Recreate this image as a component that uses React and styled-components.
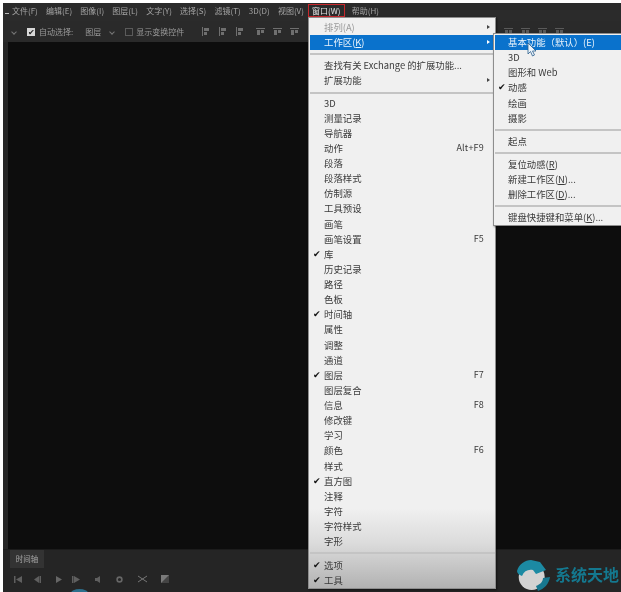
import styled, { createGlobalStyle } from "styled-components";

const Global = createGlobalStyle`
  html, body { margin: 0; padding: 0; background: #fff; overflow: hidden; }
  body { font-family: "Noto Sans CJK SC", "Liberation Sans", sans-serif; }
`;

const Shell = styled.div`
  position: relative;
  width: 621px;
  height: 592px;
  overflow: hidden;
  padding: 3px 0 0 3px;
  box-sizing: border-box;
  display: flex;
  flex-direction: column;
  background: #fff;
  filter: blur(0.5px);
`;

const MenuBar = styled.div`
  height: 18px;
  box-sizing: border-box;
  padding: 0 0 4px 9px;
  flex: none;
  display: flex;
  align-items: center;
  gap: 8.2px;
  background: #2b2b2b;
  color: #a3a3a3;
  font-size: 8px;
`;

const AppMark = styled.span`
  position: absolute;
  left: 5px;
  top: 13px;
  width: 4px;
  height: 1px;
  background: #bbb;
`;

const MenuTitle = styled.span`
  white-space: nowrap;
  ${(p) => p.$active && `
    color: #e4e4e4;
    line-height: 11px;
    padding: 0 3px;
    margin: 0 0 0 -3px;
    outline: 1.5px solid #c8282c;
  `}
`;

const OptionBar = styled.div`
  height: 21px;
  flex: none;
  display: flex;
  align-items: center;
  padding-left: 3px;
  background: #2a2a2a;
  color: #9a9a9a;
  font-size: 8px;
  white-space: nowrap;
`;

const Chevron = styled.span`
  width: 3px;
  height: 3px;
  border-right: 1px solid #777;
  border-bottom: 1px solid #777;
  transform: rotate(45deg);
  margin-left: ${(p) => p.$left}px;
`;

const Check = styled.span`
  width: 8px;
  height: 8px;
  margin-left: 11px;
  background: #d8d8d8;
  color: #222;
  font-size: 8px;
  line-height: 8px;
  text-align: center;
`;

const Box = styled.span`
  width: 6px;
  height: 6px;
  margin-left: 11px;
  border: 1px solid #5b5b5b;
`;

const OptionLabel = styled.span`
  margin-left: ${(p) => p.$left}px;
`;

const AlignGroup = styled.div`
  display: flex;
  gap: 8px;
  margin-left: ${(p) => p.$left}px;
  opacity: ${(p) => (p.$dim ? 0.7 : 1)};
`;

const Workspace = styled.div`
  flex: 1;
  background: #262626;
  padding-left: 5px;
  display: flex;
`;

const Canvas = styled.div`
  flex: 1;
  background: #0d0d0d;
`;

const TimelinePanel = styled.div`
  height: 42px;
  flex: none;
  background: #252525;
  padding-left: 7px;
  display: flex;
  flex-direction: column;
  border-top: 1px solid #1c1c1c;
`;

const TimelineTab = styled.div`
  width: 34px;
  height: 18px;
  background: #333;
  color: #a8a8a8;
  font-size: 7.5px;
  line-height: 18px;
  text-align: center;
`;

const Controls = styled.div`
  display: flex;
  align-items: center;
  gap: 10px;
  height: 22px;
  padding-left: 4px;
`;

const PlayheadArc = styled.div`
  position: absolute;
  left: 71px;
  top: 589px;
  width: 17px;
  height: 8px;
  border-radius: 50%;
  background: #2d6f8c;
`;

const Menu = styled.div`
  position: absolute;
  box-sizing: border-box;
  left: ${(p) => p.$left}px;
  top: ${(p) => p.$top}px;
  width: ${(p) => p.$width}px;
  padding: ${(p) => p.$pad}px 0 0 1px;
  height: ${(p) => p.$height}px;
  background: ${(p) =>
    p.$fade
      ? "linear-gradient(#f0f0f0 0, #f0f0f0 86%, #dcdcdc 92%, #b2b2b2 100%)"
      : "#f0f0f0"};
  border: 1px solid #8d8d8d;
  box-shadow: 1px 1px 2px rgba(0, 0, 0, 0.5);
  color: #3a3a3a;
  font-size: 9.4px;
`;

const Row = styled.div`
  position: relative;
  height: 15.13px;
  line-height: 14px;
  padding-left: ${(p) => p.$indent}px;
  white-space: nowrap;
  ${(p) => p.$disabled && "color: #9b9b9b;"}
  ${(p) => p.$active && "background: #0a72cc; color: #e9f3fb;"}
`;

const Tick = styled.span`
  position: absolute;
  left: 3px;
  top: 0;
  font-size: 9px;
  color: #111;
`;

const Shortcut = styled.span`
  position: absolute;
  right: 11px;
  top: 0;
  font-size: 9px;
  letter-spacing: 0.2px;
`;

const Caret = styled.span`
  position: absolute;
  right: 5px;
  top: 5px;
  border-left: 3px solid ${(p) => (p.$light ? "#fff" : "#444")};
  border-top: 2.5px solid transparent;
  border-bottom: 2.5px solid transparent;
`;

const Divider = styled.div`
  height: 2px;
  margin: ${(p) => p.$top}px 0 ${(p) => p.$bottom}px;
  background: #c4c4c4;
`;

const Cursor = styled.svg`
  position: absolute;
  left: 527px;
  top: 42px;
`;

const Watermark = styled.div`
  position: absolute;
  left: 516px;
  top: 560px;
  display: flex;
  align-items: center;
  gap: 3px;
`;

const WatermarkText = styled.span`
  color: #14788f;
  font-size: 16px;
  font-weight: 700;
  line-height: 30px;
  margin-top: -4px;
  white-space: nowrap;
`;

const titles = ["文件(F)", "编辑(E)", "图像(I)", "图层(L)", "文字(Y)", "选择(S)", "滤镜(T)", "3D(D)", "视图(V)"];

const panelItems = [
  ["3D"], ["测量记录"], ["导航器"], ["动作", "Alt+F9"], ["段落"], ["段落样式"], ["仿制源"], ["工具预设"],
  ["画笔"], ["画笔设置", "F5"], ["库", null, true], ["历史记录"], ["路径"], ["色板"], ["时间轴", null, true],
  ["属性"], ["调整"], ["通道"], ["图层", "F7", true], ["图层复合"], ["信息", "F8"], ["修改键"], ["学习"],
  ["颜色", "F6"], ["样式"], ["直方图", null, true], ["注释"], ["字符"], ["字符样式"], ["字形"],
];

function AlignIcon({ flip }) {
  return (
    <svg width="9" height="9" viewBox="0 0 9 9" fill="#6f6f6f">
      {flip ? (
        <>
          <rect x="0" y="1" width="9" height="1" />
          <rect x="1" y="3" width="3" height="5" />
          <rect x="5" y="3" width="3" height="3" />
        </>
      ) : (
        <>
          <rect x="1" y="0" width="1" height="9" />
          <rect x="3" y="1" width="5" height="3" />
          <rect x="3" y="5" width="3" height="3" />
        </>
      )}
    </svg>
  );
}

function TimelineIcons() {
  return (
    <Controls>
      <svg width="8" height="7" viewBox="0 0 8 7" fill="#5f5f5f"><rect width="1.5" height="7" /><path d="M8 0v7L2 3.5z" /></svg>
      <svg width="9" height="7" viewBox="0 0 9 7" fill="#5f5f5f"><rect width="1.5" height="7" x="7.5" /><path d="M7 0v7L2 3.5z" /></svg>
      <svg width="6" height="7" viewBox="0 0 6 7" fill="#666" style={{ marginLeft: 5 }}><path d="M0 0v7l6-3.5z" /></svg>
      <svg width="9" height="7" viewBox="0 0 9 7" fill="#5f5f5f"><rect width="1.5" height="7" /><path d="M2 0v7l6-3.5z" /></svg>
      <svg width="6" height="7" viewBox="0 0 6 7" fill="#5f5f5f" style={{ marginLeft: 4 }}><path d="M0 2h2l3-2v7L2 5H0z" /></svg>
      <svg width="7" height="7" viewBox="0 0 7 7" fill="none" stroke="#666" strokeWidth="1.6" style={{ marginLeft: 5 }}><circle cx="3.5" cy="3.5" r="2.4" /></svg>
      <svg width="11" height="8" viewBox="0 0 11 8" stroke="#777" fill="none" style={{ marginLeft: 4 }}><path d="M1 1l9 6M1 7l9-6" /></svg>
      <svg width="8" height="8" viewBox="0 0 8 8" style={{ marginLeft: 3 }}><rect width="8" height="8" fill="#7a7a7a" /><path d="M0 8l8-8v8z" fill="#444" /></svg>
    </Controls>
  );
}

function WorkspaceMenu() {
  return (
    <Menu $left={493} $top={33} $width={140} $height={193} $pad={1}>
      <Row $indent={13} $active>基本功能（默认）(E)</Row>
      <Row $indent={13}>3D</Row>
      <Row $indent={13}>图形和 Web</Row>
      <Row $indent={13}><Tick>✔</Tick>动感</Row>
      <Row $indent={13}>绘画</Row>
      <Row $indent={13}>摄影</Row>
      <Divider $top={3} $bottom={3} />
      <Row $indent={13}>起点</Row>
      <Divider $top={3} $bottom={3} />
      <Row $indent={13}>复位动感(<u>R</u>)</Row>
      <Row $indent={13}>新建工作区(<u>N</u>)...</Row>
      <Row $indent={13}>删除工作区(<u>D</u>)...</Row>
      <Divider $top={3} $bottom={3} />
      <Row $indent={13}>键盘快捷键和菜单(<u>K</u>)...</Row>
    </Menu>
  );
}

function WindowMenu() {
  return (
    <Menu $left={308} $top={17} $width={188} $height={572} $pad={2} $fade>
      <Row $indent={14} $disabled>排列(A)<Caret /></Row>
      <Row $indent={14} $active>工作区(<u>K</u>)<Caret $light /></Row>
      <Divider $top={3} $bottom={3} />
      <Row $indent={14}>查找有关 Exchange 的扩展功能...</Row>
      <Row $indent={14}>扩展功能<Caret /></Row>
      <Divider $top={3} $bottom={2} />
      {panelItems.map(([label, key, on]) => (
        <Row key={label} $indent={14}>
          {on && <Tick>✔</Tick>}
          {label}
          {key && <Shortcut>{key}</Shortcut>}
        </Row>
      ))}
      <Divider $top={3} $bottom={4} />
      <Row $indent={14}><Tick>✔</Tick>选项</Row>
      <Row $indent={14}><Tick>✔</Tick>工具</Row>
    </Menu>
  );
}

export default function App() {
  return (
    <Shell>
      <Global />
      <AppMark />
      <MenuBar>
        {titles.map((t) => <MenuTitle key={t}>{t}</MenuTitle>)}
        <MenuTitle $active>窗口(W)</MenuTitle>
        <MenuTitle>帮助(H)</MenuTitle>
      </MenuBar>
      <OptionBar>
        <Chevron $left={6} />
        <Check>✔</Check>
        <OptionLabel $left={4}>自动选择:</OptionLabel>
        <OptionLabel $left={12}>图层</OptionLabel>
        <Chevron $left={9} />
        <Box />
        <OptionLabel $left={3}>显示变换控件</OptionLabel>
        <AlignGroup $left={17}>
          {[0, 1, 2].map((i) => <AlignIcon key={i} />)}
        </AlignGroup>
        <AlignGroup $left={12}>
          {[0, 1, 2].map((i) => <AlignIcon key={i} flip />)}
        </AlignGroup>
        <AlignGroup $left={205} $dim>
          {[0, 1, 2, 3].map((i) => <AlignIcon key={i} flip />)}
        </AlignGroup>
      </OptionBar>
      <Workspace>
        <Canvas />
      </Workspace>
      <TimelinePanel>
        <TimelineTab>时间轴</TimelineTab>
        <TimelineIcons />
      </TimelinePanel>
      <PlayheadArc />
      <WindowMenu />
      <WorkspaceMenu />
      <Cursor width="9" height="15" viewBox="0 0 9 15">
        <path d="M1 1v11l2.5-2.5 2 4.5 2-1-2-4h3.5z" fill="#eaf3fb" stroke="#2a5d8c" strokeWidth="0.8" />
      </Cursor>
      <Watermark>
        <svg width="36" height="32" viewBox="0 0 36 32">
          <circle cx="15.7" cy="17" r="13" fill="#d2d2d2" />
          <path d="M1 11 C3 4 9 0 15 0 L24 2 L30 10 L20 14 L17 10 C12 9 8 11 6 16 C3 15 1 13 1 11z" fill="#1c8aa3" />
          <path d="M34 17 C33 24 28 29 22 31 L20 26 C25 24 27 21 27 18z" fill="#17778f" />
        </svg>
        <WatermarkText>系统天地</WatermarkText>
      </Watermark>
    </Shell>
  );
}
